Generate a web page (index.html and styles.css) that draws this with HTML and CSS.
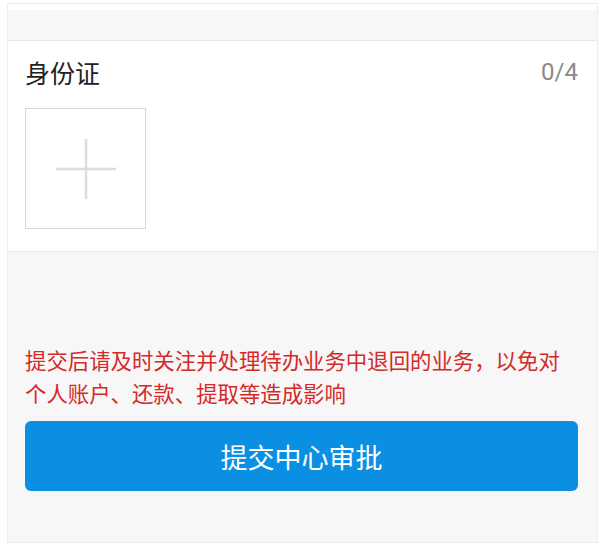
FILE: index.html
```html
<!DOCTYPE html>
<html lang="zh">
<head>
<meta charset="utf-8">
<link rel="stylesheet" href="styles.css">
</head>
<body>
<div class="frame">
  <div class="top-strip"></div>
  <div class="grey-band"></div>
  <div class="card">
    <div class="card-head">
      <span class="title">身份证</span>
      <span class="count">0/4</span>
    </div>
    <div class="upload">
      <svg width="62" height="62" viewBox="0 0 62 62"><path d="M31 1V61M1 31H61" stroke="#dcdcdc" stroke-width="2.5" fill="none"/></svg>
    </div>
  </div>
  <div class="footer">
    <p class="notice">提交后请及时关注并处理待办业务中退回的业务，以免对个人账户、还款、提取等造成影响</p>
    <button class="submit">提交中心审批</button>
  </div>
</div>
</body>
</html>
```
FILE: styles.css
```css
* { box-sizing: border-box; }
html, body { margin: 0; padding: 0; background: #fff; }
body {
  font-family: "Noto Sans CJK SC", "Noto Sans", sans-serif;
  width: 607px;
  height: 549px;
  overflow: hidden;
}
.frame {
  margin: 3px 0 0 7px;
  width: 591px;
  height: 540px;
  border: 1px solid #ececec;
  display: flex;
  flex-direction: column;
  background: #f7f7f7;
}
.top-strip { height: 6px; background: #fff; }
.grey-band { height: 31px; background: #f7f7f7; border-bottom: 1px solid #e8e8e8; }
.card {
  background: #fff;
  height: 211px;
  padding: 0 19px 0 17px;
  border-bottom: 1px solid #ececec;
}
.card-head {
  display: flex;
  justify-content: space-between;
  align-items: center;
  height: 67px;
  padding-bottom: 6px;
}
.title { font-size: 25px; color: #222; }
.count { font-family: Roboto, "Noto Sans", sans-serif; font-size: 24px; color: #8a8a8a; }
.upload {
  width: 121px;
  height: 121px;
  border: 1px solid #d8d8d8;
  display: flex;
  align-items: center;
  justify-content: center;
}
.footer {
  flex: 1;
  padding: 0 19px 0 17px;
}
.notice {
  margin: 91px 0 0;
  font-size: 21.4px;
  line-height: 33px;
  color: #d42a2a;
}
.submit {
  display: block;
  margin-top: 12px;
  width: 553px;
  height: 70px;
  border: none;
  border-radius: 6px;
  background: #0a8fe3;
  color: #fff;
  font-family: inherit;
  font-size: 27px;
  padding: 0;
}
```
